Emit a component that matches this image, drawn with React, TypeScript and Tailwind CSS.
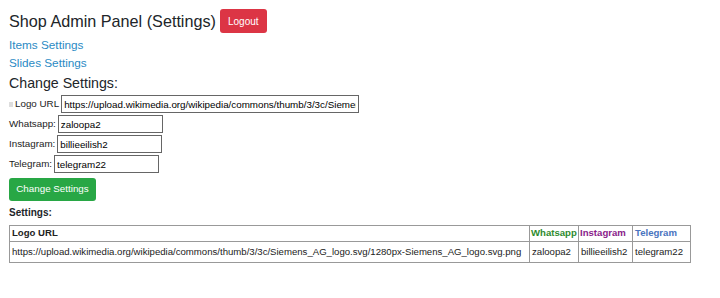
import React from "react";

const LOGO =
  "https://upload.wikimedia.org/wikipedia/commons/thumb/3/3c/Siemens_AG_logo.svg/1280px-Siemens_AG_logo.svg.png";

const Field = ({ label, value, width }: { label: string; value: string; width: string }) => (
  <div className="flex items-center h-[20px] text-[9.8px] text-[#222]">
    <span className="mr-[2px]">{label}</span>
    <input
      readOnly
      value={value}
      className={`${width} h-[18px] border border-[#666] px-[2px] text-[9.8px] text-black outline-none bg-white`}
    />
  </div>
);

export default function App() {
  return (
    <div className="w-[720px] h-[298px] bg-white px-[9px] pt-[8px] font-['Liberation_Sans',Arial,sans-serif] text-[#212529]">
      <div className="flex items-center gap-[4px]">
        <h1 className="text-[16.2px] leading-[26px]">Shop Admin Panel (Settings)</h1>
        <button className="h-[24px] px-[8px] rounded-[3px] bg-[#dc3545] text-white text-[10px]">
          Logout
        </button>
      </div>

      <div className="mt-[2px] flex flex-col text-[11.75px] leading-[18px] text-[#2a8ac4]">
        <a>Items Settings</a>
        <a>Slides Settings</a>
      </div>

      <h2 className="text-[14.2px] leading-[21px] mt-[1px]">Change Settings:</h2>

      <div className="flex flex-col">
        <div className="flex items-center h-[20px] text-[9.8px] text-[#222]">
          <span className="inline-block w-[4px] h-[5px] bg-[#ddd] mr-[2px]" />
          <span className="mr-[2px]">Logo URL</span>
          <input
            readOnly
            value={LOGO}
            className="w-[298px] h-[18px] border border-[#666] px-[2px] text-[9.8px] text-black outline-none bg-white"
          />
        </div>
        <Field label="Whatsapp:" value="zaloopa2" width="w-[105px]" />
        <Field label="Instagram:" value="billieeilish2" width="w-[105px]" />
        <Field label="Telegram:" value="telegram22" width="w-[105px]" />
      </div>

      <button className="mt-[4px] h-[23px] w-[87px] rounded-[3px] bg-[#28a745] text-white text-[9.8px]">
        Change Settings
      </button>

      <div className="mt-[5px] text-[10px] font-bold leading-[14px]">Settings:</div>

      <table className="mt-[5px] w-[681px] table-fixed border-collapse border border-[#999] text-[9.6px] text-[#222] whitespace-nowrap">
        <thead>
          <tr className="h-[16px]">
            <th className="w-[520px] border border-[#999] px-[2px] text-left font-bold">Logo URL</th>
            <th className="w-[49px] border border-[#999] px-[1px] text-left font-bold text-[#2e8b2e]">Whatsapp</th>
            <th className="w-[54px] border border-[#999] px-[1px] text-left font-bold text-[#8a1c8a]">Instagram</th>
            <th className="w-[58px] border border-[#999] px-[2px] text-left font-bold text-[#4a74c0]">Telegram</th>
          </tr>
        </thead>
        <tbody>
          <tr className="h-[21px]">
            <td className="border border-[#999] px-[2px]">{LOGO}</td>
            <td className="border border-[#999] px-[2px]">zaloopa2</td>
            <td className="border border-[#999] px-[2px]">billieeilish2</td>
            <td className="border border-[#999] px-[2px]">telegram22</td>
          </tr>
        </tbody>
      </table>
    </div>
  );
}
